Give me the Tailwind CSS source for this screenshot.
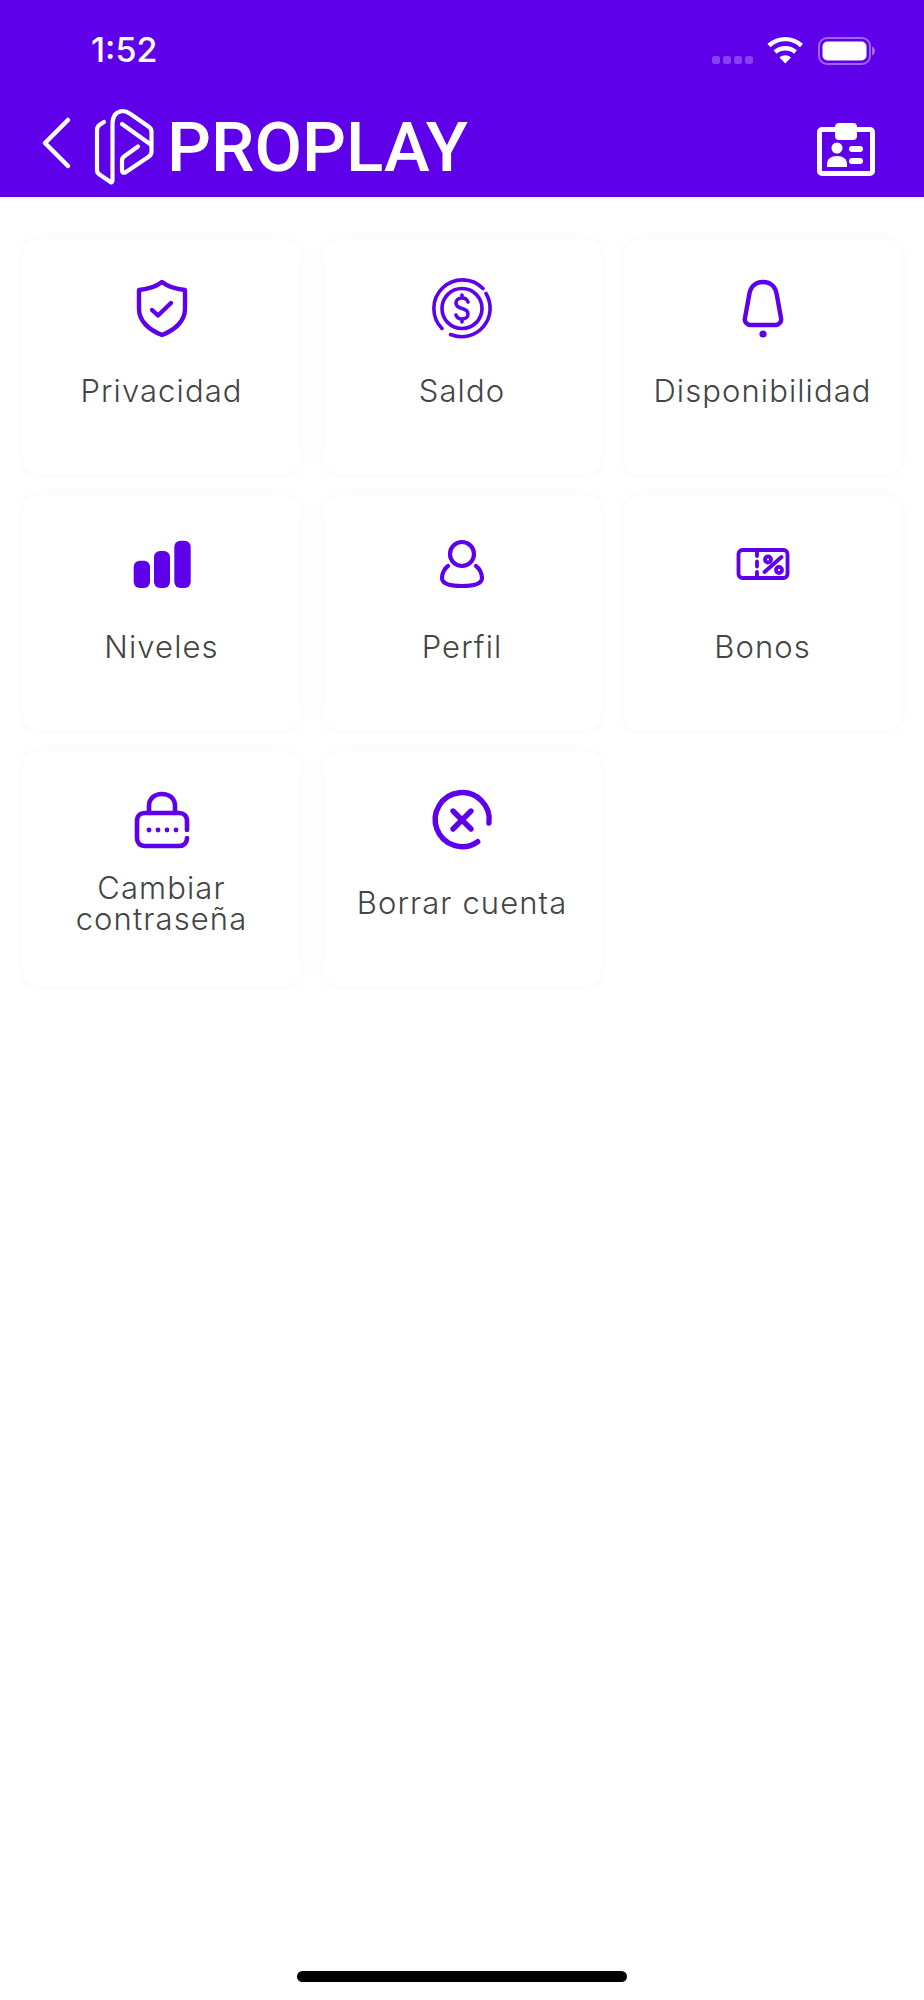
<!DOCTYPE html>
<html lang="es">
<head>
    <meta charset="UTF-8">
    <meta name="viewport" content="width=device-width, initial-scale=1.0">
    <title>Proplay</title>
    <script src="https://cdn.jsdelivr.net/npm/@tailwindcss/browser@4"></script>
</head>
<body class="bg-white font-['Inter',sans-serif]">
<div class="relative flex h-[2000px] w-[924px] flex-col overflow-hidden">
    <header class="h-[197px] shrink-0 bg-[#5f00eb] text-white">
        <!-- status bar -->
        <div class="flex h-[100px] items-start justify-between">
            <span class="ml-[91px] mt-[29px] text-[34px] font-medium leading-[42px]">1:52</span>
            <svg class="mr-[48px] mt-[36px]" width="164" height="30" viewBox="0 0 164 30" fill="none">
                <g fill="#fff" fill-opacity=".25">
                    <rect x="0" y="20" width="8" height="8" rx="2.5"/><rect x="11" y="20" width="8" height="8" rx="2.5"/><rect x="22" y="20" width="8" height="8" rx="2.5"/><rect x="33" y="20" width="8" height="8" rx="2.5"/>
                </g>
                <g stroke="#fff" stroke-width="4.4">
                    <path d="M57 9.500c9.500-8.500 23-8.500 32.500 0"/>
                    <path d="M63 16c6-5 14.500-5 20.500 0"/>
                </g>
                <path d="M67.500 21.500c3.500-3 8-3 11.500 0l-5.750 6z" fill="#fff"/>
                <rect x="107" y="2" width="51" height="26" rx="8" stroke="#fff" stroke-opacity=".4" stroke-width="2"/>
                <rect x="110.500" y="5.500" width="44" height="19" rx="5" fill="#fff"/>
                <path d="M160 10.500c2 .5 3 2.500 3 4.500s-1 4-3 4.500z" fill="#fff" fill-opacity=".4"/>
            </svg>
        </div>
        <!-- nav bar -->
        <nav class="flex h-[97px] items-start">
            <svg class="ml-[40px] mt-[16px]" width="32" height="54" viewBox="0 0 32 54" fill="none" stroke="#fff" stroke-width="4.500" stroke-linecap="round" stroke-linejoin="round">
                <path d="M28 4 5 27l23 23"/>
            </svg>
            <svg class="ml-[22px] mt-[6px]" width="62" height="84" viewBox="94 106 62 84" fill="none" stroke="#fff" stroke-width="4.200" stroke-linecap="round" stroke-linejoin="round">
                <path d="M104 122l-4 2.500q-3 2-3 5.500v40q0 3 2.500 4.500l11 7.500q2 1 2-2V124q0-12 10-13 4 0 8 3l18 12.500q3 2 3 5v20q0 3-2.500 5L126 172q-4 2-4-2v-9q0-3 2-4.500l14-10"/>
                <path d="M122 124l28 20"/>
            </svg>
            <span class="ml-[11px] mt-[7px] font-['Roboto',sans-serif] text-[69px] font-medium leading-[82px] tracking-[0px]">PROPLAY</span>
            <svg class="ml-auto mr-[47px] mt-[20px]" width="62" height="58" viewBox="0 0 62 58" fill="none">
                <rect x="4.500" y="9.500" width="53" height="44" rx="2.500" stroke="#fff" stroke-width="5"/>
                <rect x="20" y="3" width="22" height="17" rx="4" fill="#fff"/>
                <circle cx="22" cy="28" r="5.500" fill="#fff"/>
                <path d="M12 47v-3c0-5 4-8 10-8s10 3 10 8v3z" fill="#fff"/>
                <rect x="34" y="26" width="14" height="6" rx="3" fill="#fff"/>
                <rect x="34" y="38" width="14" height="6" rx="3" fill="#fff"/>
            </svg>
        </nav>
    </header>

    <main class="grid grid-cols-[277px_277px_277px] gap-x-[23.500px] gap-y-[21px] px-[23px] pt-[42px] text-[#444444]">
        <div class="flex h-[235px] flex-col items-center rounded-[16px] bg-white pt-[35px] shadow-[0_0_12px_rgba(0,0,0,0.04)]">
            <svg width="70" height="70" viewBox="0 0 70 70" fill="none" stroke="#5f00eb" stroke-width="4.400" stroke-linecap="round" stroke-linejoin="round">
                <path d="M35 8c-5 4-13 7-23 8v19c0 12 10 21 23 26 13-5 23-14 23-26V16c-10-1-18-4-23-8z"/>
                <path d="m25 36 6 5.500 13-12.500"/>
            </svg>
            <div class="flex h-[93px] items-center px-2 text-center text-[31px] font-light leading-[31px] tracking-[1.1px]">Privacidad</div>
        </div>
        <div class="flex h-[235px] flex-col items-center rounded-[16px] bg-white pt-[35px] shadow-[0_0_12px_rgba(0,0,0,0.04)]">
            <svg width="70" height="70" viewBox="0 0 70 70" fill="none" stroke="#5f00eb" stroke-width="3.600" stroke-linecap="round" stroke-linejoin="round">
                <circle cx="35" cy="34.500" r="20"/>
                <path d="M15 54.500A28.500 28.500 0 1 1 56 14.500"/>
                <path d="M59 19.500A28.500 28.500 0 0 1 23.500 60.500"/>
                <path d="M41 28c-1-3-3.500-4-6-4-3.500 0-6 2-6 5s2.500 4.500 6 5.500 6 2.500 6 5.500-2.500 5-6 5c-2.500 0-5-1-6-4M35 21v3M35 45v3"/>
            </svg>
            <div class="flex h-[93px] items-center px-2 text-center text-[31px] font-light leading-[31px] tracking-[1.1px]">Saldo</div>
        </div>
        <div class="flex h-[235px] flex-col items-center rounded-[16px] bg-white pt-[35px] shadow-[0_0_12px_rgba(0,0,0,0.04)]">
            <svg width="70" height="70" viewBox="0 0 70 70" fill="none" stroke="#5f00eb" stroke-width="4.400">
                <path d="M21 22C22 13 27 8 35 8s13 5 14 14l4 22c1 4-2 7-6 7H23c-4 0-7-3-6-7z"/>
                <circle cx="35" cy="60" r="3.600" fill="#5f00eb" stroke="none"/>
            </svg>
            <div class="flex h-[93px] items-center px-2 text-center text-[31px] font-light leading-[31px] tracking-[1.1px]">Disponibilidad</div>
        </div>
        <div class="flex h-[235px] flex-col items-center rounded-[16px] bg-white pt-[35px] shadow-[0_0_12px_rgba(0,0,0,0.04)]">
            <svg width="70" height="70" viewBox="0 0 70 70" fill="#5f00eb">
                <rect x="6.700" y="30.700" width="16.300" height="27.300" rx="6"/>
                <rect x="27" y="21" width="16" height="37" rx="6"/>
                <rect x="47.300" y="10.700" width="16.400" height="47.300" rx="6"/>
            </svg>
            <div class="flex h-[93px] items-center px-2 text-center text-[31px] font-light leading-[31px] tracking-[1.1px]">Niveles</div>
        </div>
        <div class="flex h-[235px] flex-col items-center rounded-[16px] bg-white pt-[35px] shadow-[0_0_12px_rgba(0,0,0,0.04)]">
            <svg width="70" height="70" viewBox="0 0 70 70" fill="none" stroke="#5f00eb" stroke-width="4.200" stroke-linecap="round">
                <circle cx="35" cy="24" r="12"/>
                <path d="M21 36c-3 2-6 7-6 12 0 6 9 8 20 8s20-2 20-8c0-5-3-10-6-12"/>
            </svg>
            <div class="flex h-[93px] items-center px-2 text-center text-[31px] font-light leading-[31px] tracking-[1.1px]">Perfil</div>
        </div>
        <div class="flex h-[235px] flex-col items-center rounded-[16px] bg-white pt-[35px] shadow-[0_0_12px_rgba(0,0,0,0.04)]">
            <svg width="70" height="70" viewBox="0 0 70 70" fill="none" stroke="#5f00eb" stroke-width="3.800" stroke-linecap="round">
                <rect x="10.500" y="20" width="49" height="28" rx="4"/>
                <path d="M29 21v5M29 31.500v5M29 42v5"/>
                <circle cx="40" cy="29.500" r="3"/>
                <circle cx="51" cy="40" r="3"/>
                <path d="M36.500 42 53.500 27"/>
            </svg>
            <div class="flex h-[93px] items-center px-2 text-center text-[31px] font-light leading-[31px] tracking-[1.1px]">Bonos</div>
        </div>
        <div class="flex h-[235px] flex-col items-center rounded-[16px] bg-white pt-[35px] shadow-[0_0_12px_rgba(0,0,0,0.04)]">
            <svg width="70" height="70" viewBox="0 0 70 70" fill="none" stroke="#5f00eb" stroke-width="4.600" stroke-linecap="round">
                <path d="M22 27V20c0-8 6-12 13-12s13 4 13 12v7"/>
                <path d="M60 44v-9c0-5-3-8-8-8H18c-5 0-8 3-8 8v17c0 5 3 8 8 8h34c5 0 8-3 8-8"/>
                <g fill="#5f00eb" stroke="none">
                    <circle cx="22" cy="44" r="2.400"/><circle cx="31" cy="44" r="2.400"/><circle cx="40" cy="44" r="2.400"/><circle cx="49" cy="44" r="2.400"/>
                </g>
            </svg>
            <div class="flex h-[93px] items-center px-2 text-center text-[31px] font-light leading-[31px] tracking-[1.1px]">Cambiar contraseña</div>
        </div>
        <div class="flex h-[235px] flex-col items-center rounded-[16px] bg-white pt-[35px] shadow-[0_0_12px_rgba(0,0,0,0.04)]">
            <svg width="70" height="70" viewBox="0 0 70 70" fill="none" stroke="#5f00eb" stroke-width="5.400" stroke-linecap="round">
                <path d="M62 37A27 27 0 1 0 50.700 55.700"/>
                <path d="m26 25 18 18M44 25 26 43"/>
            </svg>
            <div class="flex h-[93px] items-center px-2 text-center text-[31px] font-light leading-[31px] tracking-[1.1px]">Borrar cuenta</div>
        </div>
    </main>

    <div class="absolute bottom-[18px] left-[297px] h-[11px] w-[330px] rounded-full bg-black"></div>
</div>
</body>
</html>
